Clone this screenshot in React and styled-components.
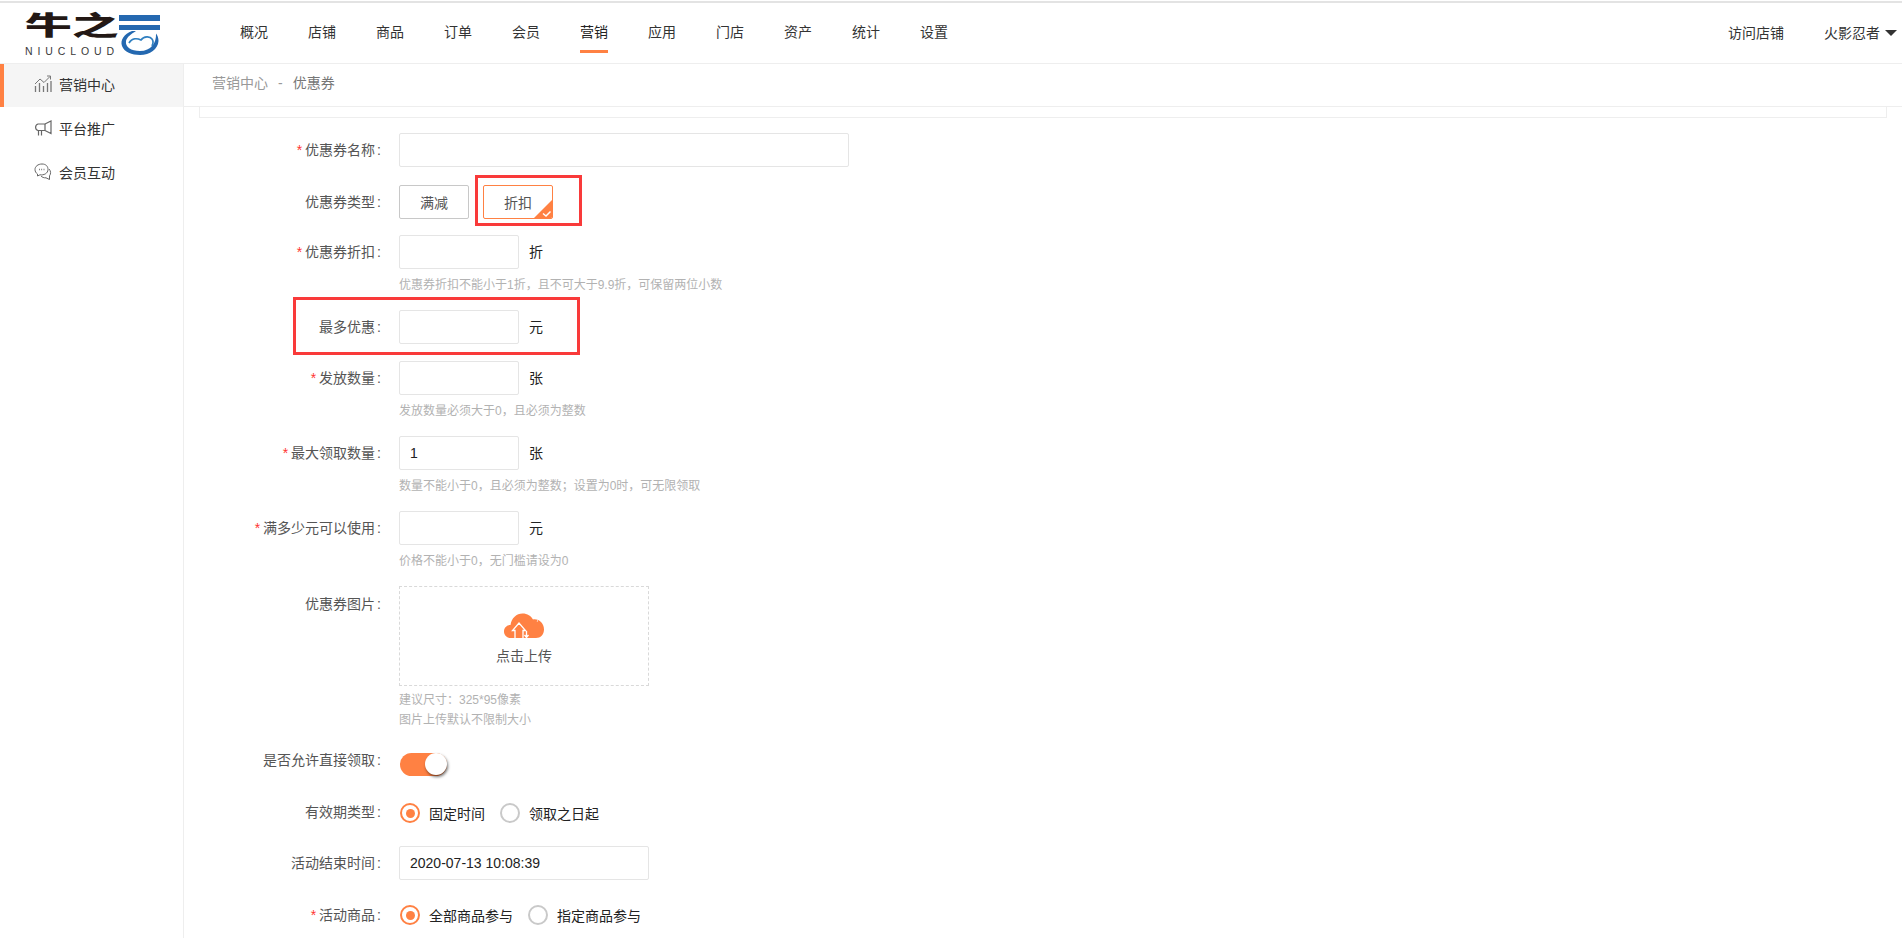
import React from "react";
import styled, { createGlobalStyle } from "styled-components";

const ORANGE = "#ff8143";
const FONT = `"Liberation Sans", "Noto Sans CJK SC", sans-serif`;

const Global = createGlobalStyle`
  html, body { margin: 0; padding: 0; background: #fff; overflow: hidden; }
  * { box-sizing: border-box; }
  body { font-family: ${FONT}; font-size: 14px; color: #333; }
`;

const Page = styled.div`
  width: 1902px;
  height: 938px;
  overflow: hidden;
  display: flex;
  flex-direction: column;
  border-top: 2px solid #e3e3e3;
  margin-top: 1px;
`;

const Header = styled.header`
  height: 61px;
  flex: none;
  display: flex;
  align-items: stretch;
  border-bottom: 1px solid #eee;
  padding: 0 5px 0 25px;
`;
const LogoBox = styled.div`
  width: 215px;
  flex: none;
  position: relative;
  padding-top: 8px;
`;
const LogoCn = styled.div`
  font-family: "Noto Sans CJK SC", sans-serif;
  font-weight: 900;
  font-size: 30px;
  line-height: 28px;
  height: 28px;
  width: 60px;
  white-space: nowrap;
  color: #231815;
  transform: scale(1.56, 0.88);
  transform-origin: left top;
`;
const LogoEn = styled.div`
  font-family: "Liberation Sans", sans-serif;
  font-size: 10.5px;
  line-height: 10px;
  letter-spacing: 4.9px;
  color: #3a3a3a;
  margin-top: 7px;
`;
const LogoMark = styled.svg`
  position: absolute;
  left: 94px;
  top: 11px;
`;
const Nav = styled.nav`
  display: flex;
  gap: 40px;
  flex: 1;
`;
const NavItem = styled.a`
  position: relative;
  color: ${(p) => (p.$active ? "#222" : "#333")};
  line-height: 58px;
  height: 60px;
  font-size: 14px;
  &::after {
    content: "";
    display: ${(p) => (p.$active ? "block" : "none")};
    position: absolute;
    left: 0;
    right: 0;
    top: 47px;
    height: 3px;
    background: ${ORANGE};
  }
`;
const HeaderRight = styled.div`
  display: flex;
  align-items: center;
  height: 58px;
  gap: 40px;
`;
const UserMenu = styled.span`
  display: flex;
  align-items: center;
  gap: 5px;
`;
const Caret = styled.i`
  width: 0;
  height: 0;
  border-left: 6px solid transparent;
  border-right: 6px solid transparent;
  border-top: 6px solid #333;
  margin-top: 1px;
`;

const Body = styled.div`
  flex: 1;
  display: flex;
  min-height: 0;
`;
const Sidebar = styled.aside`
  width: 184px;
  flex: none;
  border-right: 1px solid #eee;
`;
const SideItem = styled.div`
  height: ${(p) => (p.$active ? "43px" : "44px")};
  display: flex;
  align-items: center;
  gap: 7px;
  padding-left: ${(p) => (p.$active ? "30px" : "34px")};
  padding-bottom: ${(p) => (p.$active ? "4px" : "2px")};
  border-left: ${(p) => (p.$active ? `4px solid ${ORANGE}` : "0")};
  background: ${(p) => (p.$active ? "#f5f5f5" : "transparent")};
  color: #333;
`;
const Main = styled.main`
  flex: 1;
  min-width: 0;
`;
const Crumb = styled.div`
  height: 43px;
  line-height: 39px;
  border-bottom: 1px solid #eee;
  padding-left: 28px;
  color: #999;
`;
const CrumbSep = styled.span`
  margin: 0 10px;
`;
const CrumbLast = styled.span`
  color: #777;
`;
const TopCard = styled.div`
  height: 11px;
  margin: 0 15px 0 15px;
  border: 1px solid #eee;
  border-top: 0;
`;
const Form = styled.div`
  padding: 15px 0 0 15px;
`;
const Row = styled.div`
  position: relative;
  display: flex;
  margin-top: ${(p) => p.$mt ?? 16}px;
`;
const Label = styled.label`
  width: 182px;
  flex: none;
  text-align: right;
  line-height: ${(p) => p.$lh ?? 34}px;
  height: 34px;
  color: #555;
  margin-right: 18px;
`;
const Colon = styled.span`
  margin-left: 2px;
`;
const Star = styled.span`
  color: #f33;
  margin-right: 3px;
`;
const Control = styled.div`
  min-width: 0;
`;
const Line = styled.div`
  display: flex;
  align-items: center;
  height: 34px;
`;
const Input = styled.input`
  display: block;
  width: ${(p) => p.$w}px;
  height: 34px;
  border: 1px solid #e5e5e5;
  border-radius: 2px;
  padding: 0 10px;
  font: 14px ${FONT};
  color: #222;
  outline: none;
  background: #fff;
`;
const Unit = styled.span`
  margin-left: 10px;
  padding-bottom: 2px;
  color: #222;
`;
const Hint = styled.div`
  height: 25px;
  line-height: 32px;
  font-size: 12px;
  color: #b2b2b2;
`;
const TypeGroup = styled.div`
  display: flex;
  gap: 14px;
`;
const TypeCard = styled.div`
  position: relative;
  overflow: hidden;
  width: 70px;
  height: 34px;
  line-height: 34px;
  text-align: center;
  border-radius: 2px;
  color: #555;
  border: 1px solid ${(p) => (p.$on ? ORANGE : "#c8c8c8")};
`;
const Corner = styled.svg`
  position: absolute;
  right: -1px;
  bottom: -1px;
`;
const RedBox = styled.div`
  position: absolute;
  pointer-events: none;
  left: ${(p) => p.$l}px;
  top: ${(p) => p.$t}px;
  width: ${(p) => p.$w}px;
  height: ${(p) => p.$h}px;
  border: 3px solid #f93a3a;
`;
const Upload = styled.div`
  width: 250px;
  height: 100px;
  border: 1px dashed #d9d9d9;
  display: flex;
  flex-direction: column;
  align-items: center;
  padding-top: 26px;
  color: #555;
`;
const UploadText = styled.div`
  line-height: 20px;
  margin-top: 7px;
`;
const UploadHints = styled.div`
  padding-top: 4px;
  padding-bottom: 2px;
  font-size: 12px;
  line-height: 20px;
  color: #b2b2b2;
`;
const Switch = styled.div`
  position: relative;
  width: 47px;
  height: 23px;
  margin-left: 1px;
  border-radius: 12px;
  background: ${ORANGE};
`;
const Knob = styled.div`
  position: absolute;
  right: 0;
  top: 0;
  width: 22px;
  height: 22px;
  border-radius: 50%;
  background: #fff;
  box-shadow: 1px 2px 3px rgba(0, 0, 0, 0.55);
`;
const RadioGroup = styled.div`
  display: flex;
  align-items: center;
  height: 34px;
  gap: 15px;
  padding-left: 1px;
`;
const RadioItem = styled.div`
  display: flex;
  align-items: center;
  gap: 9px;
  color: #222;
`;
const RadioDot = styled.span`
  width: 20px;
  height: 20px;
  border-radius: 50%;
  border: 2px solid ${(p) => (p.$on ? ORANGE : "#c9c9c9")};
  display: flex;
  align-items: center;
  justify-content: center;
  &::after {
    content: "";
    width: 9px;
    height: 9px;
    border-radius: 50%;
    background: ${(p) => (p.$on ? ORANGE : "transparent")};
  }
`;

const ChartIcon = () => (
  <svg width="18" height="18" viewBox="0 0 18 18" fill="none" stroke="#777" strokeWidth="1">
    <path d="M1 9 L6 4 L10 7.500 L16 1.500 M13 1 H16.500 V4.500" />
    <path d="M1.500 11 V17 M5.500 8 V17 M9.500 11 V17 M13.500 8 V17 M17 6 V17" strokeWidth="1.300" />
  </svg>
);
const HornIcon = () => (
  <svg width="18" height="16" viewBox="0 0 18 16" fill="none" stroke="#666" strokeWidth="1.200">
    <path d="M17 1 V13.500 L11 10.500 H4 A3.400 3.400 0 0 1 4 4 H11 Z" />
    <path d="M11 4 V10.500 M4.500 10.500 V15.500 M7.500 10.500 V15.500" />
  </svg>
);
const ChatIcon = () => (
  <svg width="18" height="18" viewBox="0 0 18 18" fill="none" stroke="#666" strokeWidth="1">
    <path d="M8 1 C4 1 1 3.400 1 6.500 C1 8.500 2 10 3.500 11 L3.500 13 L6 11.800 C9.600 12.400 14 10.500 14 6.500 C14 3.400 12 1 8 1 Z" />
    <path d="M15 6 C17 8 17 11 15.500 12.800 V16.500 L12 14.800 C10 15 8 14.200 7 13" />
    <path d="M5 6.500 H5.800 M7.300 6.500 H8.100 M9.600 6.500 H10.400" strokeWidth="1.300" />
  </svg>
);
const CloudIcon = () => (
  <svg width="40" height="26" viewBox="0 0 40 26">
    <path
      fill={ORANGE}
      d="M7 25 C2.500 25 0 22 0 18.500 C0 14.500 3 12 6.500 12 C7.500 5 12.500 0.500 18.500 0.500 C23.500 0.500 27 3 29 6.500 C35 5.500 40 10.500 40 16.500 C40 21.500 36.500 25 32 25 Z"
    />
    <path
      fill="none"
      stroke="#fff"
      strokeWidth="1.300"
      d="M11 25 V17.500 H8.500 L15 10 L21.500 17.500 H19 V25 M22.500 18 V24 M20.500 22 L22.500 24.500 L24.500 22 M33 7.800 L33.800 8.200"
    />
  </svg>
);

const LogoSvg = () => (
  <LogoMark width="42" height="44" viewBox="0 0 42 44">
    <rect x="0" y="1" width="41" height="6" fill="#2468b0" />
    <rect x="0" y="11" width="41" height="5" fill="#2468b0" />
    <path
      fill="#2468b0"
      d="M13 17 C5 20 1 26 3 32 C5 38 13 41 21 41 C31 41 39 35 39.500 27 C39.500 24 38.500 21 37 19.500 C37.500 29 32 37 21 37 C12 37 6 33 7 27 C8 23 12 20 17 17 Z"
    />
    <path
      fill="none"
      stroke="#2f7fc0"
      strokeWidth="1.700"
      d="M10 29 C13 24 18 24 22 26 C25 22 31 22 33 25 C34.500 27 34 30 33 32"
    />
  </LogoMark>
);

const NAV = ["概况", "店铺", "商品", "订单", "会员", "营销", "应用", "门店", "资产", "统计", "设置"];

const Field = ({ label, required, mt, lh, children }) => (
  <Row $mt={mt}>
    <Label $lh={lh}>
      {required && <Star>*</Star>}
      {label}
      <Colon>:</Colon>
    </Label>
    <Control>{children}</Control>
  </Row>
);

export default function App() {
  return (
    <Page>
      <Global />
      <Header>
        <LogoBox>
          <LogoCn>牛之</LogoCn>
          <LogoEn>NIUCLOUD</LogoEn>
          <LogoSvg />
        </LogoBox>
        <Nav>
          {NAV.map((n) => (
            <NavItem key={n} $active={n === "营销"}>
              {n}
            </NavItem>
          ))}
        </Nav>
        <HeaderRight>
          <span>访问店铺</span>
          <UserMenu>
            火影忍者
            <Caret />
          </UserMenu>
        </HeaderRight>
      </Header>
      <Body>
        <Sidebar>
          <SideItem $active>
            <ChartIcon />
            营销中心
          </SideItem>
          <SideItem>
            <HornIcon />
            平台推广
          </SideItem>
          <SideItem>
            <ChatIcon />
            会员互动
          </SideItem>
        </Sidebar>
        <Main>
          <Crumb>
            营销中心
            <CrumbSep>-</CrumbSep>
            <CrumbLast>优惠券</CrumbLast>
          </Crumb>
          <TopCard />
          <Form>
            <Field label="优惠券名称" required mt={0}>
              <Input $w={450} />
            </Field>
            <Field label="优惠券类型" mt={18}>
              <TypeGroup>
                <TypeCard>满减</TypeCard>
                <TypeCard $on>
                  折扣
                  <Corner width="20" height="20" viewBox="0 0 20 20">
                    <path d="M20 0 V20 H0 Z" fill={ORANGE} />
                    <path d="M10 14.500 L13 17 L17.500 12.500" fill="none" stroke="#fff" strokeWidth="1.500" />
                  </Corner>
                </TypeCard>
              </TypeGroup>
              <RedBox $l={276} $t={-10} $w={107} $h={51} />
            </Field>
            <Field label="优惠券折扣" required>
              <Line>
                <Input $w={120} />
                <Unit>折</Unit>
              </Line>
              <Hint>优惠券折扣不能小于1折，且不可大于9.9折，可保留两位小数</Hint>
            </Field>
            <Field label="最多优惠">
              <Line>
                <Input $w={120} />
                <Unit>元</Unit>
              </Line>
              <RedBox $l={94} $t={-13} $w={287} $h={58} />
            </Field>
            <Field label="发放数量" required mt={17}>
              <Line>
                <Input $w={120} />
                <Unit>张</Unit>
              </Line>
              <Hint>发放数量必须大于0，且必须为整数</Hint>
            </Field>
            <Field label="最大领取数量" required>
              <Line>
                <Input $w={120} defaultValue="1" />
                <Unit>张</Unit>
              </Line>
              <Hint>数量不能小于0，且必须为整数；设置为0时，可无限领取</Hint>
            </Field>
            <Field label="满多少元可以使用" required>
              <Line>
                <Input $w={120} />
                <Unit>元</Unit>
              </Line>
              <Hint>价格不能小于0，无门槛请设为0</Hint>
            </Field>
            <Field label="优惠券图片" lh={36}>
              <Upload>
                <CloudIcon />
                <UploadText>点击上传</UploadText>
              </Upload>
              <UploadHints>
                <div>建议尺寸：325*95像素</div>
                <div>图片上传默认不限制大小</div>
              </UploadHints>
            </Field>
            <Field label="是否允许直接领取" mt={15} lh={27}>
              <Line>
                <Switch>
                  <Knob />
                </Switch>
              </Line>
            </Field>
            <Field label="有效期类型" mt={15} lh={32}>
              <RadioGroup>
                <RadioItem>
                  <RadioDot $on />
                  固定时间
                </RadioItem>
                <RadioItem>
                  <RadioDot />
                  领取之日起
                </RadioItem>
              </RadioGroup>
            </Field>
            <Field label="活动结束时间">
              <Input $w={250} defaultValue="2020-07-13 10:08:39" />
            </Field>
            <Field label="活动商品" required mt={18}>
              <RadioGroup>
                <RadioItem>
                  <RadioDot $on />
                  全部商品参与
                </RadioItem>
                <RadioItem>
                  <RadioDot />
                  指定商品参与
                </RadioItem>
              </RadioGroup>
            </Field>
          </Form>
        </Main>
      </Body>
    </Page>
  );
}
